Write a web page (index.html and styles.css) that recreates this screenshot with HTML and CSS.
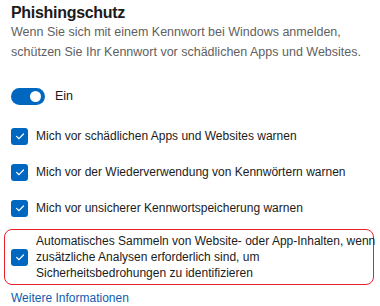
FILE: index.html
```html
<!DOCTYPE html>
<html lang="de">
<head>
  <meta charset="UTF-8">
  <title>Phishingschutz</title>
  <link rel="stylesheet" href="styles.css">
</head>
<body>
  <main class="panel">
    <h1 class="panel-title">Phishingschutz</h1>
    <p class="panel-desc">Wenn Sie sich mit einem Kennwort bei Windows anmelden,<br>schützen Sie Ihr Kennwort vor schädlichen Apps und Websites.</p>

    <div class="toggle-row">
      <span class="toggle"><span class="toggle-knob"></span></span>
      <span class="toggle-label">Ein</span>
    </div>

    <div class="check-row">
      <span class="check"><svg viewBox="0 0 16 16" width="16" height="16"><path d="M4.6 8.4 L7 10.7 L11.5 6" fill="none" stroke="#fff" stroke-width="1.2" stroke-linecap="round" stroke-linejoin="round"/></svg></span>
      <span class="check-label">Mich vor schädlichen Apps und Websites warnen</span>
    </div>
    <div class="check-row">
      <span class="check"><svg viewBox="0 0 16 16" width="16" height="16"><path d="M4.6 8.4 L7 10.7 L11.5 6" fill="none" stroke="#fff" stroke-width="1.2" stroke-linecap="round" stroke-linejoin="round"/></svg></span>
      <span class="check-label">Mich vor der Wiederverwendung von Kennwörtern warnen</span>
    </div>
    <div class="check-row">
      <span class="check"><svg viewBox="0 0 16 16" width="16" height="16"><path d="M4.6 8.4 L7 10.7 L11.5 6" fill="none" stroke="#fff" stroke-width="1.2" stroke-linecap="round" stroke-linejoin="round"/></svg></span>
      <span class="check-label">Mich vor unsicherer Kennwortspeicherung warnen</span>
    </div>

    <div class="check-row check-row-marked">
      <span class="check"><svg viewBox="0 0 16 16" width="16" height="16"><path d="M4.6 8.4 L7 10.7 L11.5 6" fill="none" stroke="#fff" stroke-width="1.2" stroke-linecap="round" stroke-linejoin="round"/></svg></span>
      <span class="check-label">Automatisches Sammeln von Website- oder App-Inhalten, wenn<br>zusätzliche Analysen erforderlich sind, um<br>Sicherheitsbedrohungen zu identifizieren</span>
    </div>

    <a class="more-link" href="#">Weitere Informationen</a>
  </main>
</body>
</html>
```

FILE: styles.css
```css
:root {
  --color-accent: #0067c0;
  --color-text: #1b1b1b;
  --color-muted: #5f5f5f;
  --color-link: #0f5cad;
  --color-mark: #e8202a;
}
* {
  margin: 0;
  padding: 0;
  box-sizing: border-box;
}
body {
  background: #ffffff;
  font-family: "Liberation Sans", Arial, sans-serif;
  color: var(--color-text);
  font-size: 12px;
}
.panel {
  display: flex;
  flex-direction: column;
  padding: 4px 0 0 11px;
}
.panel-title {
  font-size: 16px;
  font-weight: 700;
  letter-spacing: -0.3px;
  line-height: 18px;
}
.panel-desc {
  color: var(--color-muted);
  font-size: 12.5px;
  line-height: 20px;
  white-space: nowrap;
}
.toggle-row {
  display: flex;
  align-items: center;
  gap: 10px;
  margin-top: 26px;
  height: 17px;
}
.toggle {
  width: 34px;
  height: 17px;
  border-radius: 9px;
  background: var(--color-accent);
  display: flex;
  align-items: center;
  justify-content: flex-end;
  padding-right: 4px;
}
.toggle-knob {
  width: 11px;
  height: 11px;
  border-radius: 50%;
  background: #fff;
}
.toggle-label {
  font-size: 12.5px;
  line-height: 17px;
}
.check-row {
  display: flex;
  align-items: center;
  gap: 8px;
  margin-top: 18px;
  height: 18px;
}
.toggle-row + .check-row {
  margin-top: 22px;
}
.check {
  flex: none;
  width: 17px;
  height: 17px;
  border-radius: 3px;
  background: var(--color-accent);
  display: flex;
  align-items: center;
  justify-content: center;
}
.check-label {
  line-height: 17px;
  white-space: nowrap;
}
.check-row-marked {
  height: auto;
  margin: 12px 6px 0 -7px;
  padding: 3px 4px 3px 6px;
  border: 1px solid var(--color-mark);
  border-radius: 8px;
}
.check-row-marked .check-label {
  line-height: 16px;
}
.more-link {
  color: var(--color-link);
  text-decoration: none;
  margin-top: 5px;
  line-height: 16px;
  align-self: flex-start;
}
```
